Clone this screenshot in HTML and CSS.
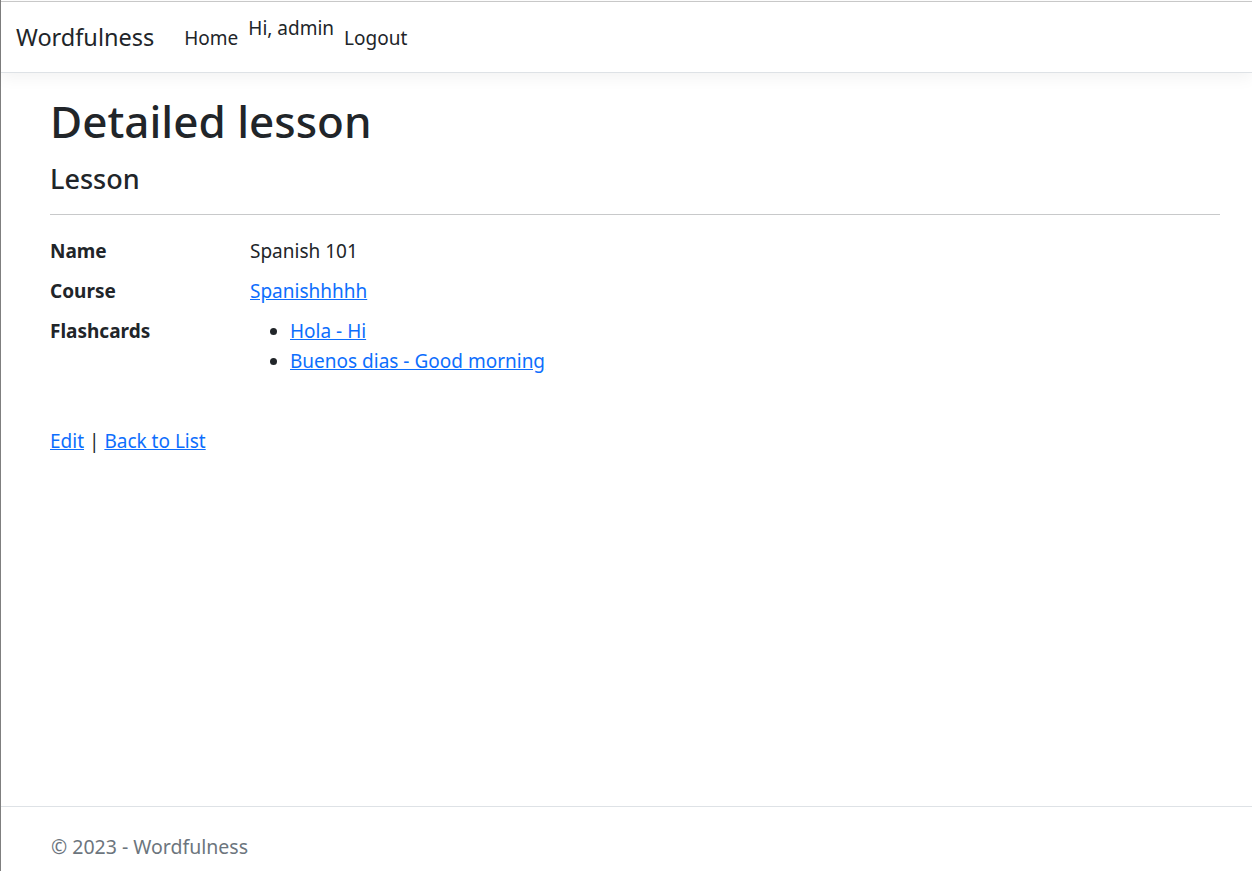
FILE: index.html
```html
<!DOCTYPE html>
<html lang="en">
<head>
<meta charset="utf-8">
<title>Detailed lesson - Wordfulness</title>
<link rel="stylesheet" href="styles.css">
</head>
<body>
<div class="frame">
  <header class="navbar">
    <a class="brand" href="#">Wordfulness</a>
    <ul class="nav">
      <li><a class="nav-link" href="#">Home</a></li>
      <li class="greeting">Hi, admin</li>
      <li><a class="nav-link" href="#">Logout</a></li>
    </ul>
  </header>
  <main class="main">
    <h1 class="title">Detailed lesson</h1>
    <div>
      <h4 class="subtitle">Lesson</h4>
      <hr class="rule">
      <dl class="details">
        <dt>Name</dt>
        <dd>Spanish 101</dd>
        <dt>Course</dt>
        <dd><a href="#">Spanishhhhh</a></dd>
        <dt>Flashcards</dt>
        <dd>
          <ul class="cards">
            <li><a href="#">Hola - Hi</a></li>
            <li><a href="#">Buenos dias - Good morning</a></li>
          </ul>
        </dd>
      </dl>
    </div>
    <div class="actions">
      <a href="#">Edit</a> | <a href="#">Back to List</a>
    </div>
  </main>
  <footer class="footer">&copy; 2023 - Wordfulness</footer>
</div>
</body>
</html>
```
FILE: styles.css
```css
* { box-sizing: border-box; }
html, body { margin: 0; padding: 0; }
body {
  font-family: "Segoe UI", "Noto Sans", sans-serif;
  font-size: 19px;
  line-height: 30px;
  color: #212529;
  background: #fff;
  overflow: hidden;
}
a { color: #0d6efd; text-decoration: underline; }
.frame {
  min-height: 100vh;
  height: 871px;
  border-left: 1px solid #7f7f7f;
  padding-top: 1px;
  display: flex;
  flex-direction: column;
}
.navbar {
  border-top: 1px solid #c8c8c8;
  border-bottom: 1px solid #dee2e6;
  box-shadow: 0 5px 15px rgba(0,0,0,.05);
  padding: 11px 15px 9px;
  display: flex;
  align-items: center;
}
.brand {
  font-size: 23.5px;
  line-height: 37.5px;
  padding: 6.25px 0;
  margin-right: 20px;
  color: #212529;
  text-decoration: none;
}
.nav {
  list-style: none;
  margin: 0;
  padding: 0;
  display: flex;
  align-items: flex-start;
  height: 50px;
}
.nav-link {
  display: block;
  padding: 10px;
  color: #212529;
  text-decoration: none;
}
.greeting { line-height: 30px; }
.main {
  flex: 1;
  padding: 18px 32px 0 49px;
}
.title {
  font-size: 44px;
  font-weight: 500;
  line-height: 60px;
  margin: 0 0 10px;
}
.subtitle {
  font-size: 27px;
  font-weight: 500;
  line-height: 36px;
  margin: 0 0 10px;
}
.rule {
  border: 0;
  border-top: 1px solid #c8c9ca;
  margin: 17px 0 21px;
}
.details {
  display: grid;
  grid-template-columns: 200px 1fr;
  margin: 0 0 20px;
}
.details dt { font-weight: 700; margin: 0; }
.details dd { margin: 0 0 10px; }
.cards { margin: 0 0 20px; padding-left: 40px; }
.footer {
  border-top: 1px solid #dee2e6;
  padding: 25px 0 9px 50px;
  color: #6c757d;
  white-space: nowrap;
  font-size: 19.5px;
}
```
